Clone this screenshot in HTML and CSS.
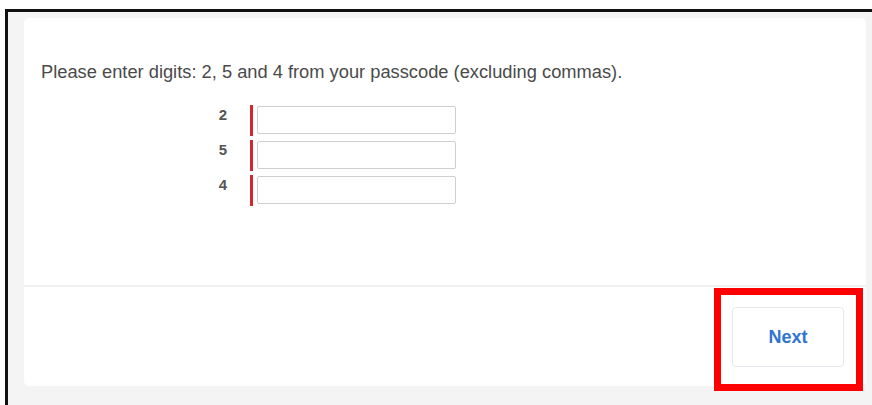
FILE: index.html
```html
<!DOCTYPE html>
<html lang="en">
<head>
<meta charset="utf-8">
<title>Passcode</title>
<link rel="stylesheet" href="styles.css">
</head>
<body>
<div class="frame">
  <section class="card">
    <div class="card-body">
      <p class="prompt">Please enter digits: 2, 5 and 4 from your passcode (excluding commas).</p>
      <div class="digits">
        <label class="digit-label" for="d2">2</label>
        <div class="field"><input id="d2" class="digit-input" type="password"></div>
        <label class="digit-label" for="d5">5</label>
        <div class="field"><input id="d5" class="digit-input" type="password"></div>
        <label class="digit-label" for="d4">4</label>
        <div class="field"><input id="d4" class="digit-input" type="password"></div>
      </div>
    </div>
    <div class="card-footer">
      <button class="btn-next" type="button">Next</button>
    </div>
  </section>
</div>
</body>
</html>
```

FILE: styles.css
```css
* { box-sizing: border-box; }

html, body {
  margin: 0;
  height: 100%;
  background: #ffffff;
  overflow: hidden;
}

.frame {
  margin: 9px 0 0 5px;
  height: calc(100% - 9px);
  border-top: 3px solid #111;
  border-left: 3px solid #111;
  background: #f4f4f5;
  padding: 6px 6px 0 16px;
  font-family: "Liberation Sans", Arial, sans-serif;
}

.card {
  background: #ffffff;
  border-radius: 5px;
  height: 368px;
  display: flex;
  flex-direction: column;
}

.card-body {
  height: 269px;
  padding: 44px 0 0 17px;
  border-bottom: 2px solid #f0f0f2;
}

.prompt {
  margin: 0;
  font-size: 18.3px;
  line-height: 20px;
  color: #4a4a4a;
}

.digits {
  display: grid;
  grid-template-columns: 186px 207px;
  column-gap: 23px;
  row-gap: 4px;
  margin-top: 23px;
}

.digit-label {
  justify-self: end;
  font-size: 15px;
  font-weight: bold;
  color: #555;
  line-height: 18px;
  padding-top: 1px;
}

.field {
  border-left: 3px solid #d3262e;
  padding: 1px 0 2px 4px;
}

.digit-input {
  display: block;
  width: 199px;
  height: 28px;
  margin: 0;
  border: 1px solid #cfcfcf;
  border-radius: 2px;
  background: #fff;
}

.card-footer {
  flex: 1;
  display: flex;
  justify-content: flex-end;
  align-items: flex-start;
  padding: 20px 22px 0 0;
}

.btn-next {
  position: relative;
  width: 112px;
  height: 60px;
  border: 1px solid #e6e8ee;
  border-radius: 4px;
  background: #fff;
  color: #2f74d0;
  font-family: "Liberation Sans", Arial, sans-serif;
  font-size: 18px;
  font-weight: bold;
  cursor: pointer;
}

/* highlight ring drawn around the Next button */
.btn-next::after {
  content: "";
  position: absolute;
  top: -20px;
  left: -19px;
  right: -20px;
  bottom: -25px;
  border: 7px solid #ff0000;
  pointer-events: none;
}
```
